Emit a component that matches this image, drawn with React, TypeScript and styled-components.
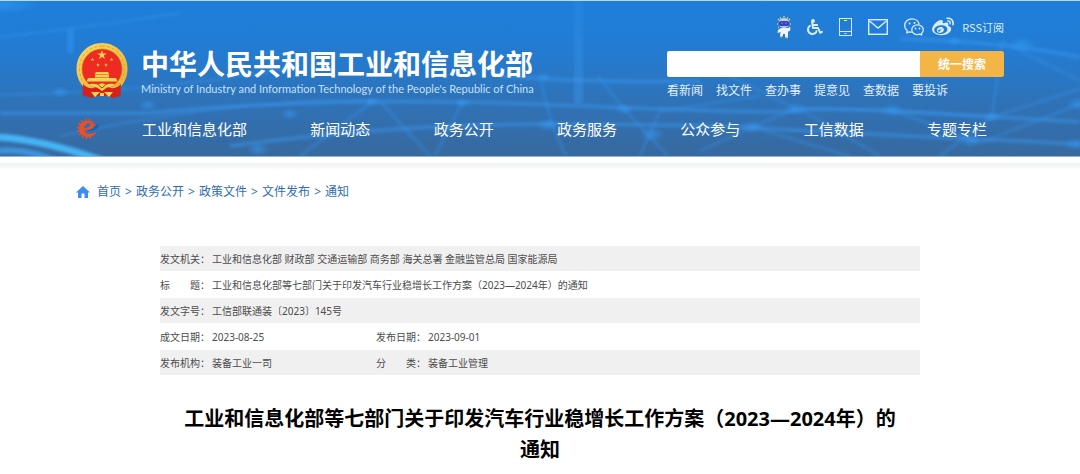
import React from "react";
import styled, { createGlobalStyle } from "styled-components";
import { FaWheelchair, FaWeibo } from "react-icons/fa";

const GlobalStyle = createGlobalStyle`
  * { box-sizing: border-box; }
  body {
    margin: 0;
    background: #fff;
    color: #4c4c4c;
    font-family: "Noto Sans", "Noto Sans CJK SC", sans-serif;
    font-size: 12px;
  }
  a { color: inherit; text-decoration: none; }
`;

const Header = styled.header`
  position: relative;
  border-top: 1px solid #bdd8ee;
  border-bottom: 1px solid #8fb4d6;
  background: linear-gradient(180deg, #1d7fdc 0%, #247bd0 35%, #2f72b7 65%, #37699f 100%);
  color: #fff;
`;

const Backdrop = styled.svg`
  position: absolute;
  inset: 0;
  width: 100%;
  height: 100%;
`;

const Container = styled.div`
  position: relative;
  max-width: 960px;
  margin: 0 auto;
  padding: 0 16px;
`;

const TopArea = styled.div`
  display: flex;
  justify-content: space-between;
`;

const Brand = styled.a`
  display: flex;
  align-items: flex-start;
  gap: 13px;
  padding-top: 42px;
`;

const BrandText = styled.span`
  display: flex;
  flex-direction: column;
  white-space: nowrap;
`;

const BrandName = styled.span`
  font-family: "Noto Sans CJK SC", sans-serif;
  font-size: 28px;
  font-weight: 700;
  line-height: 40px;
`;

const BrandEnglish = styled.span`
  font-family: Lato, sans-serif;
  font-size: 11px;
  line-height: 12px;
  color: #c4e0fa;
`;

const Tools = styled.div`
  display: flex;
  flex-direction: column;
  width: 337px;
  padding-top: 14px;
`;

const IconBar = styled.div`
  display: flex;
  align-items: center;
  justify-content: flex-end;
  gap: 8px;
  height: 24px;
  color: #d9ecff;
  font-size: 11px;
`;

const IconGroup = styled.div`
  display: flex;
  align-items: center;
  gap: 16px;
`;

const IconLink = styled.a`
  display: flex;
`;

const FeedLink = styled.a`
  font-family: "Noto Sans CJK SC", sans-serif;
  line-height: 16px;
`;

const SearchForm = styled.form`
  display: flex;
  height: 26px;
  margin-top: 12px;
  border-radius: 2px;
  overflow: hidden;
`;

const SearchInput = styled.input`
  flex: 1;
  min-width: 0;
  border: 0;
  padding: 0 8px;
  background: #fff;
  font: inherit;
  outline: none;
`;

const SearchButton = styled.button`
  width: 84px;
  border: 0;
  padding: 0;
  background: #f3b545;
  color: #fff;
  font: inherit;
  font-weight: 700;
`;

const QuickLinks = styled.div`
  display: flex;
  gap: 13px;
  margin-top: 4px;
  line-height: 20px;
  color: #e3f0fc;
`;

const NavBar = styled.div`
  display: flex;
  align-items: center;
  gap: 42px;
  height: 55px;
`;

const Nav = styled.nav`
  display: flex;
  flex: 1;
  justify-content: space-between;
  padding-right: 17px;
  font-size: 15px;
  line-height: 24px;
  white-space: nowrap;
`;

const Strip = styled.div`
  height: 7px;
  margin-top: 6px;
  background: linear-gradient(180deg, #edf2f6, #fff);
`;

const Breadcrumb = styled.nav`
  display: flex;
  align-items: center;
  gap: 7px;
  padding-top: 12px;
  line-height: 20px;
  color: #2f6cb3;
`;

const Trail = styled.div`
  display: flex;
`;

const Separator = styled.span`
  width: 15px;
  text-align: center;
`;

const Article = styled.main`
  max-width: 760px;
  margin: 44px auto 0;
`;

const Meta = styled.table`
  width: 100%;
  border-collapse: collapse;
  table-layout: fixed;
  font-size: 10px;
  line-height: 16px;
`;

const LabelColumn = styled.col`
  width: 52px;
`;

const DateColumn = styled.col`
  width: 164px;
`;

const MetaRow = styled.tr<{ $shaded?: boolean }>`
  height: ${(p) => (p.$shaded ? 25 : 27)}px;
  background: ${(p) => (p.$shaded ? "#f0f0f0" : "#fff")};
`;

const Label = styled.th`
  padding: 0;
  font-weight: 400;
  text-align: left;
  white-space: nowrap;
`;

const Value = styled.td`
  padding: 0;
`;

const Title = styled.h1`
  margin: 28px 0 0;
  padding: 0 16px;
  color: #000;
  font-size: 20px;
  font-weight: 700;
  line-height: 31px;
  text-align: center;
`;

const Phrase = styled.span`
  display: inline-block;
`;

const glows: [number, number, number][] = [
  [544, 76, 5], [624, 108, 6], [548, 124, 7], [372, 101, 5], [462, 102, 5],
  [652, 133, 8], [752, 126, 7], [796, 108, 7], [892, 109, 7], [992, 116, 6],
  [970, 140, 7], [1078, 103, 7], [1076, 143, 7], [1022, 43, 8], [955, 40, 5],
  [148, 104, 6], [258, 148, 7], [290, 113, 6], [60, 91, 6],
];

function Scene() {
  return (
    <Backdrop viewBox="0 0 1080 155" preserveAspectRatio="none" aria-hidden="true">
      <defs>
        <radialGradient id="glow">
          <stop offset="0" stopColor="#359cf5" stopOpacity="0.55" />
          <stop offset="1" stopColor="#359cf5" stopOpacity="0" />
        </radialGradient>
        <linearGradient id="beam" x1="0" x2="0" y1="0" y2="1">
          <stop offset="0" stopColor="#3a9cf3" stopOpacity="0.15" />
          <stop offset="1" stopColor="#3a9cf3" stopOpacity="0.4" />
        </linearGradient>
        <filter id="soft" x="-10%" y="-60%" width="120%" height="220%">
          <feGaussianBlur stdDeviation="1.500" />
        </filter>
      </defs>
      <g fill="none" stroke="#3796ee" filter="url(#soft)">
        <g strokeOpacity="0.5" strokeWidth="4">
          <path d="M0 112H150Q330 94 560 104T800 109T1080 121" />
          <path d="M230 145Q400 122 560 123T760 127T1080 143" />
          <path d="M500 75Q600 82 700 80" />
          <path d="M900 38Q1000 40 1080 56" />
        </g>
        <g strokeOpacity="0.34" strokeWidth="3">
          <path d="M0 36Q90 26 180 12" />
          <path d="M0 94Q180 90 300 64" />
          <path d="M60 135Q240 96 380 100L430 155" />
          <path d="M372 101L300 155M462 102L435 155M540 76L552 124L566 155" />
          <path d="M598 75L624 108L668 155M752 126L796 108L700 60M796 108L892 109L992 116" />
          <path d="M992 116L1002 40M992 116L1080 88M992 116L940 155M892 109L980 142L1080 103" />
          <path d="M880 155L800 108M640 155L660 110L760 95M1002 40L1080 80M700 150L752 126L850 155" />
        </g>
      </g>
      <rect x="574" y="0" width="9" height="102" fill="url(#beam)" filter="url(#soft)" />
      <rect x="67" y="28" width="7" height="24" fill="#2f93ef" fillOpacity="0.5" filter="url(#soft)" />
      <g filter="url(#soft)" fill="none">
        <path d="M-4 136Q40 138 104 160" stroke="#45b4f5" strokeWidth="7" />
        <path d="M-4 150Q30 147 60 162" stroke="#3a94dc" strokeWidth="6" />
      </g>
      <ellipse cx="4" cy="4" rx="34" ry="9" fill="url(#glow)" />
      {glows.map(([x, y, r]) => (
        <ellipse key={`${x}-${y}`} cx={x} cy={y} rx={r * 1.6} ry={r} fill="url(#glow)" />
      ))}
    </Backdrop>
  );
}

const star = "M0-1L.23-.31L.95-.31L.37.12L.59.81L0 .38L-.59.81L-.37.12L-.95-.31L-.23-.31Z";

function Emblem() {
  return (
    <svg width="52" height="55" viewBox="0 0 52 55" aria-hidden="true">
      <defs>
        <linearGradient id="gold" x1="0" x2="1" y1="0" y2="1">
          <stop offset="0" stopColor="#ffd95c" />
          <stop offset="1" stopColor="#e8b036" />
        </linearGradient>
      </defs>
      <path d="M26 0C40 0 51.500 11 51.500 26C51.500 34 48 40 44.500 44L38 47H14L7.500 44C4 40 .5 34 .5 26C.5 11 12 0 26 0Z" fill="url(#gold)" />
      <path d="M26 3C38 3 48.500 12 48.500 26C48.500 33 46 38 42 42M26 3C14 3 3.500 12 3.500 26C3.500 33 6 38 10 42" fill="none" stroke="#e0a62f" strokeWidth="1" strokeDasharray="3 2" />
      <circle cx="26" cy="26" r="20" fill="#ee2a22" stroke="#c9781d" strokeWidth=".6" />
      <path d="M7 41Q11 46 18 45L26 42L34 45Q41 46 45 41L44.500 53L37 55L32 53H20L15 55L6.500 52Z" fill="#d8201b" />
      <g fill="#f8d54e">
        <path d={star} transform="translate(26 12) scale(5)" />
        <path d={star} transform="translate(16.500 16.500) scale(2)" />
        <path d={star} transform="translate(35.500 16.500) scale(2)" />
        <path d={star} transform="translate(22 22) scale(2)" />
        <path d={star} transform="translate(30 22) scale(2)" />
        <path d="M20 29H32L33.500 31.500H18.500ZM19 32H33V34.500H19ZM12 35H40L41.500 38.500H10.500Z" />
        <path d="M13 41Q20 40 22 42Q26 38.500 30 42Q32 40 39 41Q37 44 31 44.500L26 48L21 44.500Q15 44 13 41Z" />
        <path d="M15 49L24 49L19 54ZM37 49L28 49L33 54ZM24 50H28L28 53H24Z" />
      </g>
      <path d="M22.500 42L26 45L29.500 42" fill="none" stroke="#d8201b" strokeWidth="1" />
    </svg>
  );
}

function GearMark() {
  return (
    <svg width="24" height="22" viewBox="0 0 24 22" aria-hidden="true">
      <circle cx="11" cy="11" r="8.600" fill="none" stroke="#e2502a" strokeWidth="3" strokeDasharray="1.700 1.900" pathLength="54" transform="rotate(40 11 11)" strokeDashoffset="0" clipPath="url(#gearCut)" />
      <defs>
        <clipPath id="gearCut"><path d="M0 0H17V5L12 11L20 15V22H0Z" /></clipPath>
      </defs>
      <path d="M19.500 16C16 20 8.500 20 5 16C1.500 12 2.500 5.500 8 3.300C13 1.500 18 4 18 7C18 10.500 12 13 8 12.500C9.500 16 14.500 17 19.500 14Z" fill="#e8502a" />
      <path d="M8 10.500C8 7 11 5.300 13 5.300C16 5.300 15.500 9.500 8 10.500Z" fill="#2d72b8" />
      <path d="M9.500 12.500C14 12.500 18.500 10 20 6.500C21 7 23 6.500 23.500 6C23 11.500 16 14.500 9.500 12.500Z" fill="#1266b4" />
    </svg>
  );
}

function Robot() {
  return (
    <svg width="14" height="23" viewBox="0 0 14 23" aria-hidden="true">
      <path d="M1 4L2 3M3 1.500L4 2.500M7 0V1.500M11 1.500L10 2.500M13 4L12 3M0 8H1M13 8H14M1 11.500H2M12 11.500H13" stroke="#d9d84e" strokeWidth="1.500" />
      <ellipse cx="7" cy="7" rx="5.500" ry="5" fill="#b9cdf8" />
      <rect x="1.500" y="5" width="11" height="5" rx="2.500" fill="#3942b8" />
      <path d="M4 7H6M8 7H10" stroke="#8b83f0" strokeWidth="1" />
      <path d="M4 12H10L13.500 11.500L13 15L11 15.500V21H8V18H6V20H3L3.500 16L.5 17L1 14Z" fill="#edf3ff" />
      <path d="M3 20.500H5.500M8.500 21.500H11" stroke="#e2ca50" strokeWidth="1.500" />
    </svg>
  );
}

function Phone() {
  return (
    <svg width="13" height="18" viewBox="0 0 13 18" fill="none" stroke="currentColor" aria-hidden="true">
      <rect x=".5" y=".5" width="12" height="17" />
      <path d="M.5 13.500H12.500M5 2.500H8M5.500 15.500H7.500" />
    </svg>
  );
}

function Mail() {
  return (
    <svg width="20" height="16" viewBox="0 0 20 16" fill="none" stroke="currentColor" strokeWidth="1.400" aria-hidden="true">
      <rect x=".7" y=".7" width="18.600" height="14.600" />
      <path d="M1.500 2L10 9L18.500 2" />
    </svg>
  );
}

function Wechat() {
  return (
    <svg width="20" height="18" viewBox="0 0 20 18" fill="none" stroke="currentColor" strokeWidth="1.300" strokeLinejoin="round" aria-hidden="true">
      <path d="M8 14.200Q6.500 14.200 5.200 13.800L2.800 15L3.200 12.600C1.600 11.400 .7 9.600 .7 7.500C.7 3.700 3.900 .8 8 .8C11.700 .8 14.700 3.200 15.200 6.500" />
      <path d="M13.500 6.800C16.800 6.800 19.300 9 19.300 11.700C19.300 13.200 18.600 14.500 17.500 15.400L17.700 17L16 16.200Q14.900 16.600 13.500 16.600C10.300 16.600 7.800 14.500 7.800 11.700C7.800 9 10.300 6.800 13.500 6.800Z" />
      <g fill="currentColor" stroke="none">
        <circle cx="5.500" cy="5.500" r="1" />
        <circle cx="10.500" cy="5" r="1" />
        <circle cx="11.500" cy="10.500" r=".9" />
        <circle cx="15.500" cy="10.500" r=".9" />
      </g>
    </svg>
  );
}

function Home() {
  return (
    <svg width="14" height="12" viewBox="0 0 14 12" aria-hidden="true">
      <path d="M7 0L14 6.500H12V12H8.500V7.500H5.500V12H2V6.500H0Z" fill="#3b8cf5" />
    </svg>
  );
}

const quickLinks = ["看新闻", "找文件", "查办事", "提意见", "查数据", "要投诉"];
const navItems = ["工业和信息化部", "新闻动态", "政务公开", "政务服务", "公众参与", "工信数据", "专题专栏"];
const trail = ["首页", "政务公开", "政策文件", "文件发布", "通知"];

export default function App() {
  return (
    <>
      <GlobalStyle />
      <Header>
        <Scene />
        <Container>
          <TopArea>
            <Brand href="#">
              <Emblem />
              <BrandText>
                <BrandName>中华人民共和国工业和信息化部</BrandName>
                <BrandEnglish>Ministry of Industry and Information Technology of the People's Republic of China</BrandEnglish>
              </BrandText>
            </Brand>
            <Tools>
              <IconBar>
                <IconGroup>
                  <IconLink href="#" aria-label="智能问答"><Robot /></IconLink>
                  <IconLink href="#" aria-label="无障碍"><FaWheelchair size={16} /></IconLink>
                  <IconLink href="#" aria-label="手机版"><Phone /></IconLink>
                  <IconLink href="#" aria-label="邮箱"><Mail /></IconLink>
                  <IconLink href="#" aria-label="微信"><Wechat /></IconLink>
                </IconGroup>
                <IconLink href="#" aria-label="微博"><FaWeibo size={22} /></IconLink>
                <FeedLink href="#">RSS订阅</FeedLink>
              </IconBar>
              <SearchForm onSubmit={(e) => e.preventDefault()}>
                <SearchInput type="text" aria-label="搜索" />
                <SearchButton type="submit">统一搜索</SearchButton>
              </SearchForm>
              <QuickLinks>
                {quickLinks.map((text) => <a key={text} href="#">{text}</a>)}
              </QuickLinks>
            </Tools>
          </TopArea>
          <NavBar>
            <GearMark />
            <Nav>
              {navItems.map((text) => <a key={text} href="#">{text}</a>)}
            </Nav>
          </NavBar>
        </Container>
      </Header>
      <Strip />
      <Container>
        <Breadcrumb>
          <Home />
          <Trail>
            {trail.map((text, i) => (
              <React.Fragment key={text}>
                {i > 0 && <Separator>&gt;</Separator>}
                <a href="#">{text}</a>
              </React.Fragment>
            ))}
          </Trail>
        </Breadcrumb>
      </Container>
      <Article>
        <Meta>
          <colgroup>
            <LabelColumn />
            <DateColumn />
            <LabelColumn />
            <col />
          </colgroup>
          <tbody>
            <MetaRow $shaded>
              <Label scope="row">发文机关：</Label>
              <Value colSpan={3}>工业和信息化部 财政部 交通运输部 商务部 海关总署 金融监管总局 国家能源局</Value>
            </MetaRow>
            <MetaRow>
              <Label scope="row">标　　题：</Label>
              <Value colSpan={3}>工业和信息化部等七部门关于印发汽车行业稳增长工作方案（2023—2024年）的通知</Value>
            </MetaRow>
            <MetaRow $shaded>
              <Label scope="row">发文字号：</Label>
              <Value colSpan={3}>工信部联通装〔2023〕145号</Value>
            </MetaRow>
            <MetaRow>
              <Label scope="row">成文日期：</Label>
              <Value>2023-08-25</Value>
              <Label scope="row">发布日期：</Label>
              <Value>2023-09-01</Value>
            </MetaRow>
            <MetaRow $shaded>
              <Label scope="row">发布机构：</Label>
              <Value>装备工业一司</Value>
              <Label scope="row">分　　类：</Label>
              <Value>装备工业管理</Value>
            </MetaRow>
          </tbody>
        </Meta>
        <Title>工业和信息化部等七部门关于印发汽车行业稳增长工作方案（2023—2024年）的<Phrase>通知</Phrase></Title>
      </Article>
    </>
  );
}
